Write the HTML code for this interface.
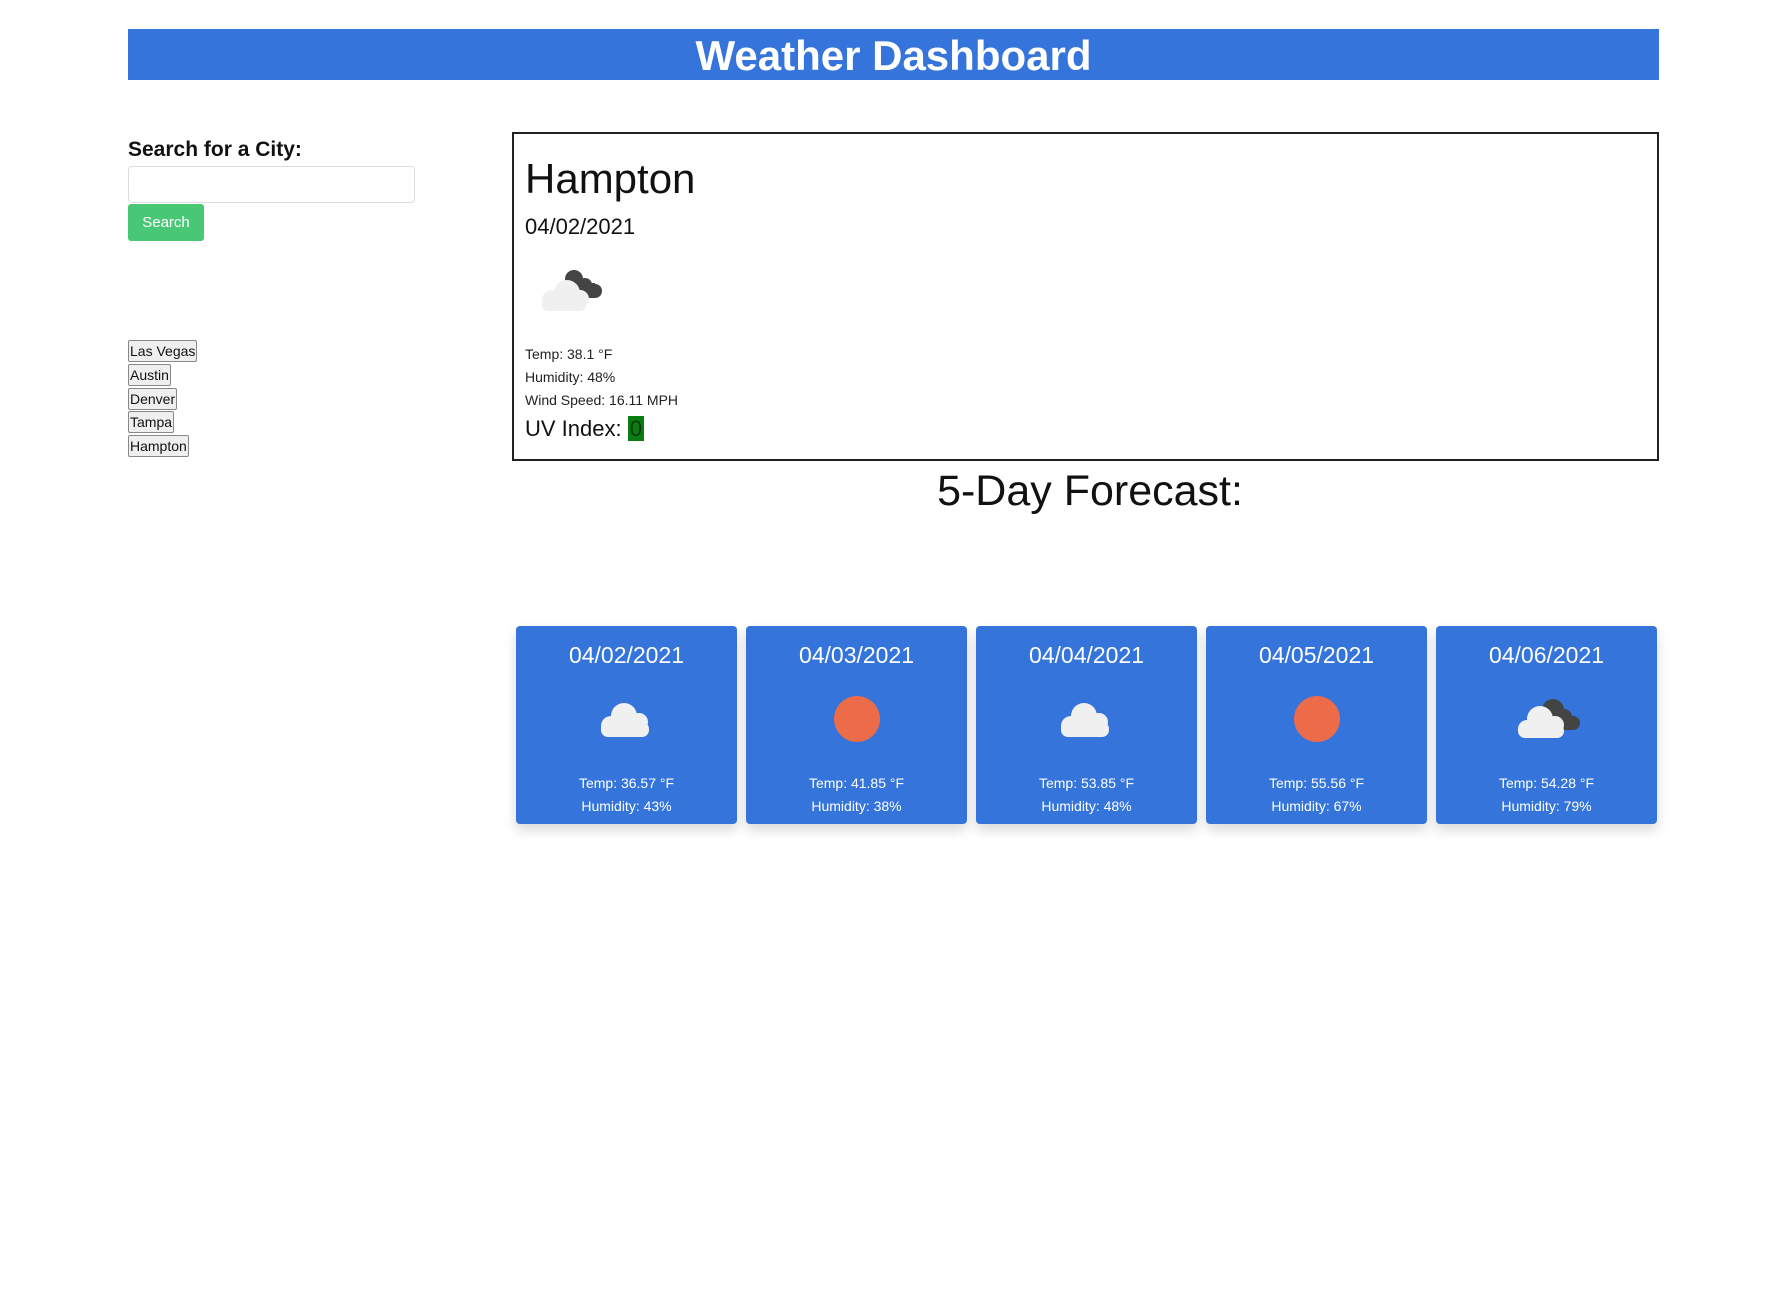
<!DOCTYPE html>
<html><head><meta charset="utf-8"><style>
*{margin:0;padding:0;box-sizing:border-box}
body{width:1786px;height:1315px;background:#fff;font-family:"Liberation Sans",sans-serif;color:#111;position:relative;overflow:hidden}
.a{position:absolute}
#hdr{left:128px;top:29px;width:1531px;height:51px;background:#3474db;color:#fff;font-weight:bold;font-size:42px;text-align:center;line-height:54px}
.cb{position:absolute;left:128px;height:22px;border:1px solid #888;border-radius:2px;background:#efefef;font-size:14px;line-height:20px;padding:0 1px;color:#111}
.card{position:absolute;top:626px;width:221px;height:198px;background:#3474db;border-radius:4px;box-shadow:0 6px 12px rgba(0,0,0,.15);color:#fff;text-align:center}
.card .d{position:absolute;top:16px;width:100%;font-size:23px}
.card .ic{position:absolute;left:0;top:66px;width:100%;height:52px}
.card .t{position:absolute;top:146px;width:100%;font-size:14px;line-height:23px}
</style></head><body>
<div id="hdr" class="a">Weather Dashboard</div>
<div class="a" style="left:128px;top:138px;font-size:21px;font-weight:bold">Search for a City:</div>
<div class="a" style="left:128px;top:166px;width:287px;height:37px;border:1px solid #ddd;border-radius:4px"></div>
<div class="a" style="left:128px;top:204px;width:76px;height:37px;background:#48c774;border-radius:3px;color:#fff;font-size:15px;text-align:center;line-height:37px">Search</div>
<div class="cb" style="top:340px">Las Vegas</div>
<div class="cb" style="top:364px">Austin</div>
<div class="cb" style="top:388px">Denver</div>
<div class="cb" style="top:411px">Tampa</div>
<div class="cb" style="top:435px">Hampton</div>
<div class="a" style="left:512px;top:132px;width:1147px;height:329px;border:2px solid #222"></div>
<div class="a" style="left:525px;top:155px;font-size:42px">Hampton</div>
<div class="a" style="left:525px;top:214px;font-size:22px">04/02/2021</div>
<svg class="a" style="left:538px;top:268px" width="70" height="44" viewBox="0 0 70 44">
<g fill="#444"><circle cx="36" cy="11" r="9"/><circle cx="47" cy="17" r="7"/><circle cx="57" cy="23" r="7"/><rect x="30" y="15" width="27" height="15"/></g>
<g fill="#f0f0f0"><circle cx="29" cy="25" r="13"/><circle cx="14" cy="32" r="10"/><circle cx="42" cy="31" r="9"/><rect x="4" y="30" width="44" height="13" rx="6"/></g>
</svg>
<div class="a" style="left:525px;top:343px;font-size:14px;line-height:23px;color:#222">Temp: 38.1 °F<br>Humidity: 48%<br>Wind Speed: 16.11 MPH</div>
<div class="a" style="left:525px;top:416px;font-size:22px">UV Index: <span style="background:#0a7d12;color:#053a06;padding:0 2px">0</span></div>
<div class="a" style="left:790px;top:467px;width:600px;text-align:center;font-size:43px">5-Day Forecast:</div>

<div class="card" style="left:516px"><div class="d">04/02/2021</div>
<svg class="ic" viewBox="0 0 221 52"><g fill="#f0f0f0"><circle cx="108" cy="24" r="13"/><circle cx="123" cy="30" r="9"/><circle cx="95" cy="34" r="10"/><rect x="85" y="30" width="48" height="15" rx="7"/></g></svg>
<div class="t">Temp: 36.57 °F<br>Humidity: 43%</div></div>
<div class="card" style="left:746px"><div class="d">04/03/2021</div>
<svg class="ic" viewBox="0 0 221 52"><circle cx="111" cy="27" r="23" fill="#ec6c4a"/></svg>
<div class="t">Temp: 41.85 °F<br>Humidity: 38%</div></div>
<div class="card" style="left:976px"><div class="d">04/04/2021</div>
<svg class="ic" viewBox="0 0 221 52"><g fill="#f0f0f0"><circle cx="108" cy="24" r="13"/><circle cx="123" cy="30" r="9"/><circle cx="95" cy="34" r="10"/><rect x="85" y="30" width="48" height="15" rx="7"/></g></svg>
<div class="t">Temp: 53.85 °F<br>Humidity: 48%</div></div>
<div class="card" style="left:1206px"><div class="d">04/05/2021</div>
<svg class="ic" viewBox="0 0 221 52"><circle cx="111" cy="27" r="23" fill="#ec6c4a"/></svg>
<div class="t">Temp: 55.56 °F<br>Humidity: 67%</div></div>
<div class="card" style="left:1436px"><div class="d">04/06/2021</div>
<svg class="ic" viewBox="0 0 221 52"><g fill="#444"><circle cx="117" cy="18" r="11"/><circle cx="128" cy="25" r="8"/><circle cx="137" cy="31" r="7"/><rect x="110" y="24" width="27" height="14"/></g>
<g fill="#f0f0f0"><circle cx="104" cy="27" r="13"/><circle cx="119" cy="33" r="9"/><circle cx="91" cy="37" r="9"/><rect x="82" y="32" width="46" height="14" rx="7"/></g></svg>
<div class="t">Temp: 54.28 °F<br>Humidity: 79%</div></div>
</body></html>
